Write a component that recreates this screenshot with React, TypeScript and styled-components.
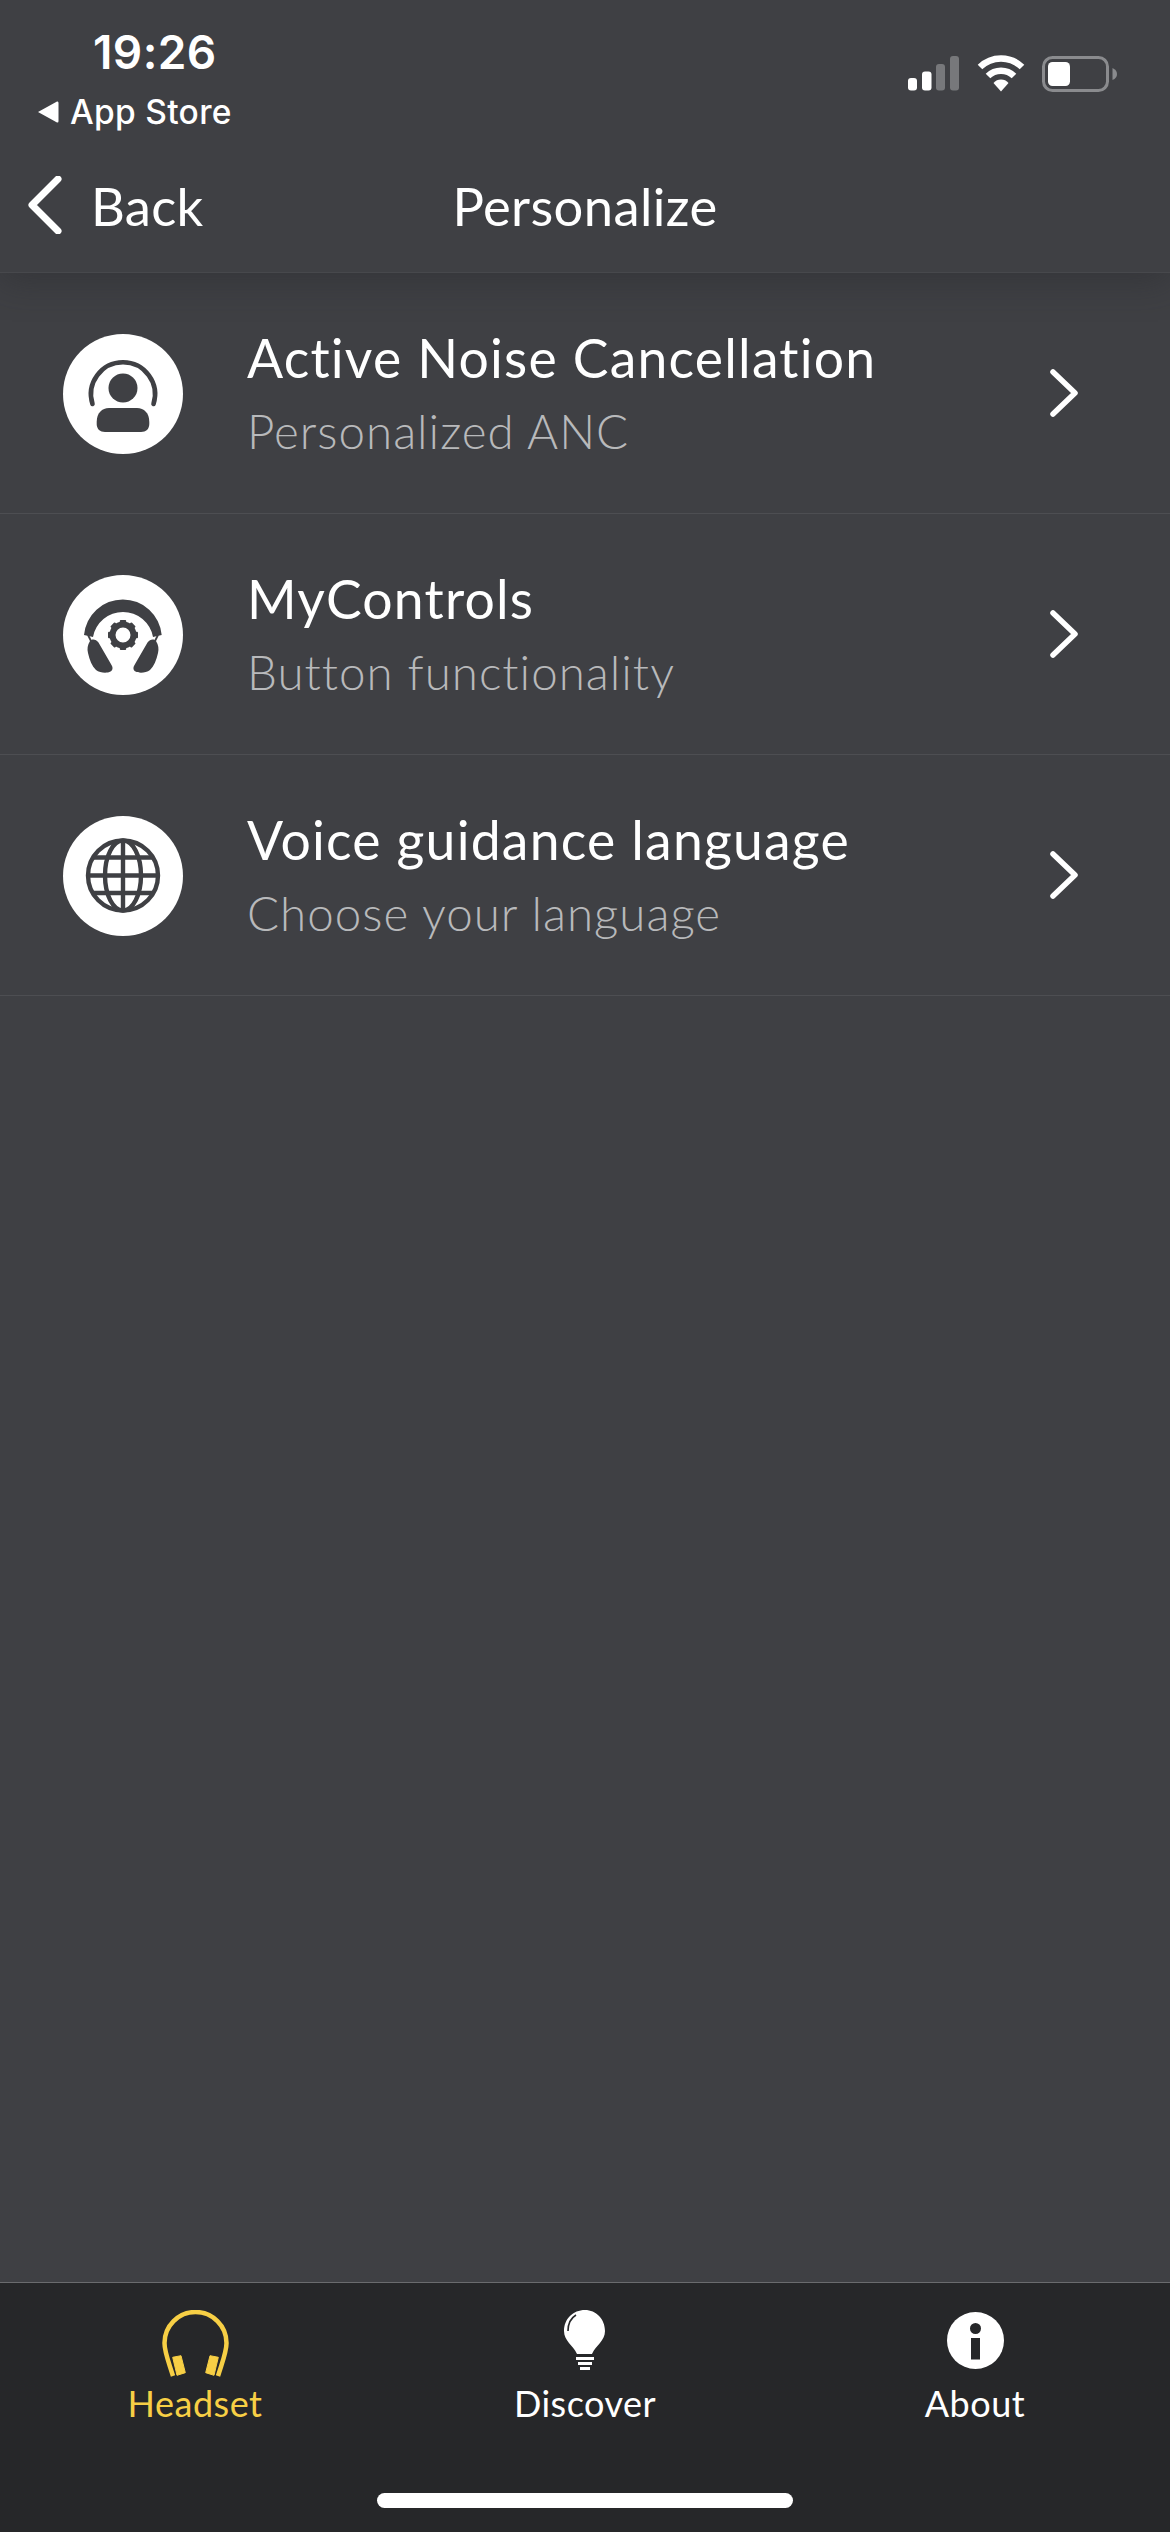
import React from "react";
import styled, { createGlobalStyle } from "styled-components";

const Global = createGlobalStyle`
  html, body { margin: 0; padding: 0; background: #3f4044; }
  #root { width: 1170px; height: 2532px; }
  * { box-sizing: border-box; }
`;

const Screen = styled.div`
  width: 1170px;
  height: 2532px;
  display: flex;
  flex-direction: column;
  background: #3f4044;
  color: #fff;
  font-family: Lato, "Open Sans", sans-serif;
  overflow: hidden;
`;

const Top = styled.header`
  height: 273px;
  flex: none;
  display: flex;
  flex-direction: column;
  background: #3f4044;
  border-bottom: 1px solid #47484c;
  box-shadow: 0 8px 34px rgba(40, 40, 44, 0.45);
  position: relative;
  z-index: 1;
`;

const StatusBar = styled.div`
  height: 136px;
  flex: none;
  display: flex;
  justify-content: space-between;
  align-items: flex-start;
  padding: 25px 53px 0 37px;
`;

const TimeBlock = styled.div`
  display: flex;
  flex-direction: column;
  align-items: flex-start;
`;

const Time = styled.div`
  font-family: Inter, sans-serif;
  font-weight: 600;
  font-size: 46px;
  line-height: 54px;
  letter-spacing: 0.4px;
  margin-left: 56px;
`;

const Origin = styled.div`
  display: flex;
  align-items: center;
  gap: 11px;
  margin-top: 5px;
  font-family: Inter, sans-serif;
  font-weight: 500;
  font-size: 33.5px;
  line-height: 56px;
  letter-spacing: 0.3px;
`;

const StatusIcons = styled.div`
  display: flex;
  align-items: center;
  gap: 17px;
  margin-top: 30px;
`;

const NavBar = styled.nav`
  flex: 1;
  display: grid;
  grid-template-columns: 1fr auto 1fr;
  align-items: center;
  padding: 2px 27px 0;
`;

const BackLink = styled.div`
  display: flex;
  align-items: center;
  gap: 28px;
  font-size: 52.5px;
  letter-spacing: 0.3px;
`;

const NavTitle = styled.div`
  font-size: 52.5px;
  letter-spacing: 0.4px;
`;

const List = styled.main`
  flex: 1;
`;

const Row = styled.div`
  height: 241px;
  display: flex;
  align-items: center;
  padding: 0 91px 0 63px;
  border-bottom: 1px solid #4d4e52;
`;

const Badge = styled.div`
  width: 120px;
  height: 120px;
  flex: none;
  border-radius: 50%;
  background: #fff;
  margin-top: 2px;
`;

const RowText = styled.div`
  flex: 1;
  margin-left: 64px;
  display: flex;
  flex-direction: column;
  margin-top: 1px;
`;

const RowTitle = styled.div`
  font-size: 53.5px;
  line-height: 74px;
  letter-spacing: 1.2px;
`;

const RowSub = styled.div`
  font-size: 47.5px;
  line-height: 74px;
  font-weight: 300;
  color: #b8b9bb;
  letter-spacing: 1px;
`;

const TabBar = styled.footer`
  height: 250px;
  flex: none;
  background: #262729;
  border-top: 1px solid #6a6b6e;
  display: flex;
  flex-direction: column;
`;

const Tabs = styled.div`
  display: grid;
  grid-template-columns: repeat(3, 390px);
  height: 210px;
  padding-top: 27px;
`;

const Tab = styled.div<{ $active?: boolean }>`
  display: flex;
  flex-direction: column;
  align-items: center;
  color: ${(p) => (p.$active ? "#f7cf45" : "#fff")};
`;

const TabIcon = styled.div`
  height: 68px;
  display: flex;
  align-items: flex-start;
`;

const TabLabel = styled.div`
  font-size: 36px;
  line-height: 44px;
  margin-top: 3px;
  letter-spacing: 0.5px;
`;

const HomeBar = styled.div`
  width: 416px;
  height: 15px;
  border-radius: 8px;
  background: #fff;
  margin: 0 auto;
`;

const DARK = "#3f4044";

const PersonIcon = () => (
  <svg width="120" height="120" viewBox="0 0 120 120">
    <circle cx="60" cy="54" r="14.5" fill={DARK} />
    <path d="M29.5 70 A32 32 0 1 1 90.5 70" fill="none" stroke={DARK} strokeWidth="4.6" strokeLinecap="round" />
    <path d="M33.7 88 C33.7 79 39 74 46 74 H74 C81 74 86.3 79 86.3 88 V90 C86.3 95 83 98 78 98 H42 C37 98 33.7 95 33.7 90 Z" fill={DARK} />
  </svg>
);

const HeadphonesGearIcon = () => (
  <svg width="120" height="120" viewBox="0 0 120 120">
    <path d="M21 60 A39 39 0 0 1 98.7 60 L90 62 A30.5 30.5 0 0 0 30 62 Z" fill={DARK} />
    <path d="M25 60 L29 68 M95 60 L91 68" stroke={DARK} strokeWidth="1.8" />
    <path d="M27 66 C24.5 70 24 74 25 78 C26.5 85 29 91 33 95 C37 98 44 98.5 47.5 96.5 C50 95 50 92.5 48.5 90 L35.5 67.5 C33 64 29 63.5 27 66 Z" fill={DARK} />
    <path d="M93 66 C95.5 70 96 74 95 78 C93.5 85 91 91 87 95 C83 98 76 98.5 72.5 96.5 C70 95 70 92.5 71.5 90 L84.5 67.5 C87 64 91 63.5 93 66 Z" fill={DARK} />
    <circle cx="60" cy="60" r="10.5" fill="none" stroke={DARK} strokeWidth="6" />
    {[0, 45, 90, 135, 180, 225, 270, 315].map((a) => (
      <rect key={a} x="56.8" y="45" width="6.4" height="6" rx="1" fill={DARK} transform={`rotate(${a} 60 60)`} />
    ))}
  </svg>
);

const GlobeIcon = () => (
  <svg width="120" height="120" viewBox="0 0 120 120">
    <g fill="none" stroke={DARK} strokeWidth="4.4">
      <circle cx="60" cy="59.5" r="35" />
      <ellipse cx="60" cy="59.5" rx="18" ry="35" />
      <path d="M60 24.5 V94.5 M25 59.5 H95 M31 41.5 H89 M31 77 H89" />
    </g>
  </svg>
);

const Chevron = () => (
  <svg width="30" height="48" viewBox="0 0 30 48">
    <path d="M4 3 L26 24 L4 45" fill="none" stroke="#fff" strokeWidth="5.5" strokeLinecap="round" strokeLinejoin="round" />
  </svg>
);

const rows = [
  { title: "Active Noise Cancellation", sub: "Personalized ANC", icon: <PersonIcon /> },
  { title: "MyControls", sub: "Button functionality", icon: <HeadphonesGearIcon /> },
  { title: "Voice guidance language", sub: "Choose your language", icon: <GlobeIcon /> },
];

export default function App() {
  return (
    <Screen>
      <Global />
      <Top>
        <StatusBar>
          <TimeBlock>
            <Time>19:26</Time>
            <Origin>
              <svg width="22" height="24" viewBox="0 0 22 24">
                <path d="M1 12 L20 1.5 Q21.500 1 21.500 3 V21 Q21.500 23 20 22.500 Z" fill="#fff" />
              </svg>
              App Store
            </Origin>
          </TimeBlock>
          <StatusIcons>
            <svg width="52" height="35" viewBox="0 0 52 35">
              <rect x="0" y="22" width="9" height="12.500" rx="3" fill="#fff" />
              <rect x="14" y="15.500" width="9.500" height="19" rx="3" fill="#fff" />
              <rect x="28" y="8" width="9" height="26.500" rx="3" fill="#77787b" />
              <rect x="42" y="0" width="9" height="34.500" rx="3" fill="#77787b" />
            </svg>
            <svg width="48" height="37" viewBox="0 0 48 37">
              <path d="M3 12 A30 30 0 0 1 45 12" fill="none" stroke="#fff" strokeWidth="6.500" />
              <path d="M11 21 A18.500 18.500 0 0 1 37 21" fill="none" stroke="#fff" strokeWidth="6.500" />
              <path d="M16.500 28 A10 10 0 0 1 31.500 28 L24 36.500 Z" fill="#fff" />
            </svg>
            <svg width="75" height="36" viewBox="0 0 75 36">
              <rect x="1.500" y="1.500" width="64" height="33" rx="9" fill="none" stroke="#8a8b8e" strokeWidth="3" />
              <rect x="6" y="6" width="22" height="24" rx="4.500" fill="#fff" />
              <path d="M70.500 12 Q75 14 75 18 Q75 22 70.500 24 Z" fill="#8a8b8e" />
            </svg>
          </StatusIcons>
        </StatusBar>
        <NavBar>
          <BackLink>
            <svg width="36" height="58" viewBox="0 0 36 58">
              <path d="M31 3 L5 29 L31 55" fill="none" stroke="#fff" strokeWidth="7" strokeLinecap="round" strokeLinejoin="round" />
            </svg>
            Back
          </BackLink>
          <NavTitle>Personalize</NavTitle>
          <span />
        </NavBar>
      </Top>
      <List>
        {rows.map((r) => (
          <Row key={r.title}>
            <Badge>{r.icon}</Badge>
            <RowText>
              <RowTitle>{r.title}</RowTitle>
              <RowSub>{r.sub}</RowSub>
            </RowText>
            <Chevron />
          </Row>
        ))}
      </List>
      <TabBar>
        <Tabs>
          <Tab $active>
            <TabIcon>
              <svg width="67" height="68" viewBox="0 0 67 68">
                <path d="M11 66 C6 50 2.500 42 2.500 33 A31 31 0 0 1 64.500 33 C64.500 42 61 50 56 66" fill="none" stroke="#f7cf45" strokeWidth="4.500" />
                <path d="M10.700 47.300 L19 45.700 L23.300 62.700 L15 65.300 Z M56.300 47.300 L48 45.700 L43.700 62.700 L52 65.300 Z" fill="#f7cf45" stroke="#f7cf45" strokeLinejoin="round" />
              </svg>
            </TabIcon>
            <TabLabel>Headset</TabLabel>
          </Tab>
          <Tab>
            <TabIcon>
              <svg width="42" height="62" viewBox="0 0 42 62">
                <path d="M21 0 C9 0 0 9 0 21 C0 31 9 35 13 44 H28 C32 35 41 31 41 21 C41 9 32 0 21 0 Z" fill="#fff" />
                <path d="M4 21 C4 13 7 8 12 5" fill="none" stroke="#262729" strokeWidth="1.600" />
                <path d="M12 47 H30 V50 H12 Z M14 52 H28 V55 H14 Z M16 57 H26 V60 H16 Z" fill="#fff" />
              </svg>
            </TabIcon>
            <TabLabel>Discover</TabLabel>
          </Tab>
          <Tab>
            <TabIcon>
              <svg width="57" height="59" viewBox="0 -2 57 59">
                <circle cx="28.500" cy="28.500" r="28.500" fill="#fff" />
                <circle cx="28.500" cy="16.500" r="5.500" fill="#262729" />
                <rect x="24" y="26" width="9" height="21.500" fill="#262729" />
              </svg>
            </TabIcon>
            <TabLabel>About</TabLabel>
          </Tab>
        </Tabs>
        <HomeBar />
      </TabBar>
    </Screen>
  );
}
